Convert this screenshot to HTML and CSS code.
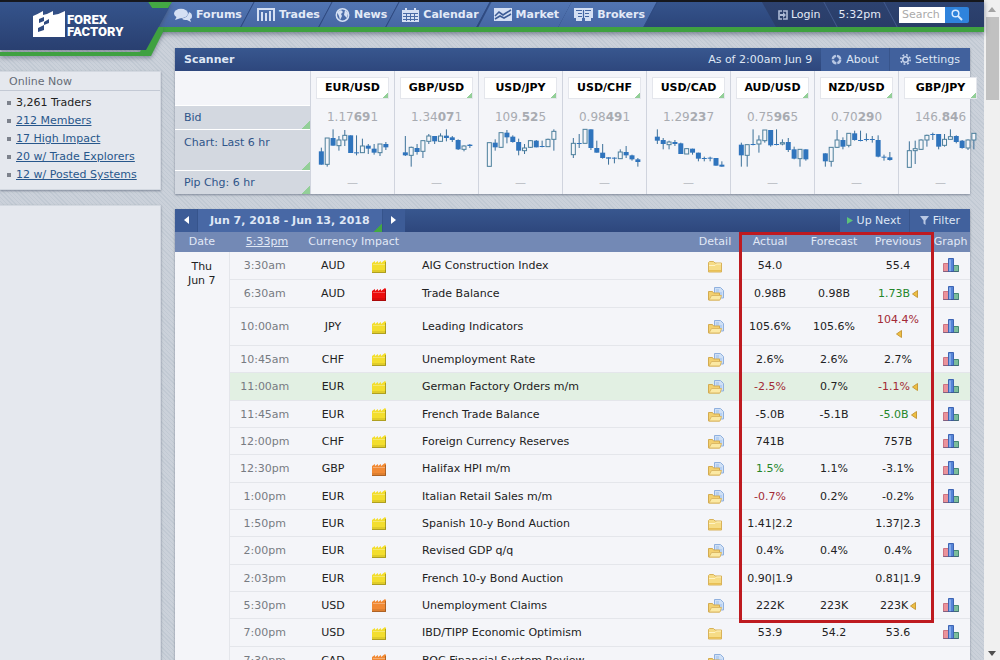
FILE: index.html
```html
<!DOCTYPE html>
<html lang="en">
<head>
<meta charset="utf-8">
<title>Forex Factory</title>
<link rel="stylesheet" href="styles.css">
</head>
<body>
<svg class="sprite" aria-hidden="true">
  <symbol id="impact" viewBox="0 0 14 13"><path d="M0 3 3 1v2l3-2v2l3-2v2l4-3 1 1v12H0z"/><path d="M0 12h14v1H0zM13 2h1v11h-1z" fill="#000" opacity=".28"/><path d="M0 10h14v2H0z" fill="#000" opacity=".08"/><path d="M1 4h12v1H1z" fill="#fff" opacity=".3"/></symbol>
  <symbol id="folder" viewBox="0 0 17 16"><path d="M1.5 14V4.500l1-1h4l1.500 1.500h6.500v9z" fill="#f6dc86" stroke="#d8b25a"/><path d="M2 7.500h6l1.500-1.500H14" fill="none" stroke="#fff3c4"/><path d="M2 12h12v1.500H2z" fill="#e8bf55"/></symbol>
  <symbol id="folder-open" viewBox="0 0 17 16"><path d="M7.500 9V1.500h6l3 3V12h-3" fill="#cfe0f6" stroke="#8fb0de"/><path d="M9 3h3v3h3v4H9z" fill="#b5cff1"/><path d="M1.500 14V5.500h4l1 1.500h6v7z" fill="#f3d06f" stroke="#d3ab50"/><path d="M2 14 4.500 9.500h10L13 14z" fill="#fbe9a4" stroke="#dcb965"/></symbol>
  <symbol id="bars" viewBox="0 0 16 14"><path d="M.5 5.500h5v8h-5z" fill="#ea929b" stroke="#cc7482"/><path d="M10.500 7.500h5v6h-5z" fill="#7cbd9c" stroke="#468a72"/><path d="M5.500.5h5v13h-5z" fill="#5584d6" stroke="#3d64b4"/><path d="M6 1.500h2v12H6z" fill="#86abea"/><path d="M0 13h16v1H0z" fill="#3c4a7c" opacity=".5"/></symbol>
  <symbol id="revised" viewBox="0 0 6 8"><path d="M5.500.5v7L.5 4z" fill="#eebf42" stroke="#c79a3c"/></symbol>
</svg>
<div class="window">
  <div class="page">
    <header class="topbar">
      <a class="brand" href="#">
        <svg class="brand-shape" viewBox="0 0 176 60" aria-hidden="true">
          <defs><linearGradient id="navy" x2="0" y2="1"><stop offset="0" stop-color="#35548c"/><stop offset="1" stop-color="#293f70"/></linearGradient></defs>
          <path d="M0 54H151L163 30V25H150L140 50H0z" fill="#3fa140"/>
          <path d="M148 0H172L168 6H152z" fill="#43a843"/>
          <path d="M0 0H148L152 6H169L146 48H0z" fill="url(#navy)"/>
        </svg>
        <svg class="brand-mark" viewBox="0 0 32 28" aria-hidden="true"><path d="M0 5Q5 3 10 0V4Q15 3 20 0V4Q27 3 32 0V26H0z" fill="#fff"/><path d="M6 8l5-2v4l-5 2zM11 11l5-3v4l-5 2zM5 17l6-3v5l-6 2z" fill="#2f4b81"/></svg>
        <span class="brand-name"><span>FOREX</span><span>FACTORY</span></span>
      </a>
      <nav class="nav">
        <a href="#"><svg width="18" height="14" viewBox="0 0 18 14"><ellipse cx="7" cy="5.500" rx="7" ry="4.700"/><path d="M3 8 1 12l6-2z"/><path d="M15 4q3 1 3 4t-2 3l1 3-4-2q-4 0-5-1.500 6-1 7-6.500z"/></svg>Forums</a>
        <a href="#"><svg width="18" height="13" viewBox="0 0 18 13"><path d="M0 0h18v2H0zM0 2h2v11H0zM4 4h2v9H4zM8 5h2v8H8zM12 3h2v10h-2zM16 2h2v11h-2z"/></svg>Trades</a>
        <a href="#"><svg width="15" height="14" viewBox="0 0 15 14"><circle cx="7.500" cy="7" r="6.200" fill="none" stroke="#d5e0f4" stroke-width="1.500"/><path d="M2 4l4-2 2 2-2 2 1 2-2 4-1-4zM10 2l3 3-1 5-3-3z"/></svg>News</a>
        <a href="#"><svg width="17" height="14" viewBox="0 0 17 14"><path d="M0 2h3V0h2v2h7V0h2v2h3v12H0z"/><path d="M1 5.500h15M1 8.500h15M1 11.500h15M4.500 5v8M8.500 5v8M12.500 5v8" stroke="#4a6ba6"/></svg>Calendar</a>
        <a href="#"><svg width="18" height="13" viewBox="0 0 18 13"><path d="M0 0h18v13H0z"/><path d="M1 8l4-4 4 3 3-2 5-3M1 11l5-3 4 2 7-4" fill="none" stroke="#3d5c97" stroke-width="1.600"/></svg>Market</a>
        <a href="#"><svg width="19" height="13" viewBox="0 0 19 13"><path d="M0 0h19v10h-2v3h-6v-3H8v3H2v-3H0z"/><path d="M2 2.500h6M11 2.500h6M4 5.500h4M11 5.500h4M4 8.500h4M11 8.500h4M9.500 2v8" stroke="#4566a2" stroke-width="1.200"/></svg>Brokers</a>
      </nav>
      <div class="tools">
        <a class="tool" href="#"><svg width="10" height="10" viewBox="0 0 10 10"><path d="M4 1H1v8h3M5 1h4v8H5" fill="none" stroke="#aebbd6" stroke-width="1.600"/><path d="M2 4h3V2l3 3-3 3V6H2z" fill="#aebbd6"/></svg>Login</a>
        <a class="tool" href="#">5:32pm</a>
        <form class="search">
          <input type="text" placeholder="Search" aria-label="Search">
          <button type="button" aria-label="Run search"><svg width="12" height="12" viewBox="0 0 12 12"><circle cx="4.500" cy="4.500" r="3.300" fill="none" stroke="#d8eaff" stroke-width="1.500"/><path d="M7 7l4 4" stroke="#d8eaff" stroke-width="2"/></svg></button>
        </form>
      </div>
    </header>

    <div class="columns">
      <aside class="sidebar">
        <section class="box">
          <h2>Online Now</h2>
          <ul>
            <li>3,261 Traders</li>
            <li><a href="#">212 Members</a></li>
            <li><a href="#">17 High Impact</a></li>
            <li><a href="#">20 w/ Trade Explorers</a></li>
            <li><a href="#">12 w/ Posted Systems</a></li>
          </ul>
        </section>
        <section class="box fill"></section>
      </aside>

      <main class="content">
        <section class="panel">
          <div class="bar">
            <h1>Scanner</h1>
            <span class="as-of">As of 2:00am Jun 9</span>
            <a class="action" href="#"><svg width="11" height="11" viewBox="0 0 11 11"><circle cx="5.500" cy="5.500" r="3.700" fill="none" stroke="#b9c8e4" stroke-width="2.400" stroke-dasharray="4.800 1"/></svg>About</a>
            <a class="action" href="#"><svg width="11" height="11" viewBox="0 0 11 11"><circle cx="5.500" cy="5.500" r="2.800" fill="none" stroke="#c5d2ea" stroke-width="1.600"/><circle cx="5.500" cy="5.500" r="4.700" fill="none" stroke="#c5d2ea" stroke-width="1.600" stroke-dasharray="1.800 1.890"/></svg>Settings</a>
          </div>
          <div class="scanner">
            <div class="labels">
              <div class="label blank"></div>
              <div class="label">Bid</div>
              <div class="label tall">Chart: Last 6 hr</div>
              <div class="label last">Pip Chg: 6 hr</div>
            </div>
            <div class="pair"><button>EUR/USD</button><p class="bid">1.17<b>69</b>1</p><svg class="candles" data-pair="EURUSD" viewBox="0 24 252 120"></svg><p class="dash">—</p></div>
            <div class="pair"><button>GBP/USD</button><p class="bid">1.34<b>07</b>1</p><svg class="candles" data-pair="GBPUSD" viewBox="0 24 252 120"></svg><p class="dash">—</p></div>
            <div class="pair"><button>USD/JPY</button><p class="bid">109.<b>52</b>5</p><svg class="candles" data-pair="USDJPY" viewBox="0 24 252 120"></svg><p class="dash">—</p></div>
            <div class="pair"><button>USD/CHF</button><p class="bid">0.98<b>49</b>1</p><svg class="candles" data-pair="USDCHF" viewBox="0 24 252 120"></svg><p class="dash">—</p></div>
            <div class="pair"><button>USD/CAD</button><p class="bid">1.29<b>23</b>7</p><svg class="candles" data-pair="USDCAD" viewBox="0 24 252 120"></svg><p class="dash">—</p></div>
            <div class="pair"><button>AUD/USD</button><p class="bid">0.75<b>96</b>5</p><svg class="candles" data-pair="AUDUSD" viewBox="0 24 252 120"></svg><p class="dash">—</p></div>
            <div class="pair"><button>NZD/USD</button><p class="bid">0.70<b>29</b>0</p><svg class="candles" data-pair="NZDUSD" viewBox="0 24 252 120"></svg><p class="dash">—</p></div>
            <div class="pair"><button>GBP/JPY</button><p class="bid">146.<b>84</b>6</p><svg class="candles" data-pair="GBPJPY" viewBox="0 24 252 120"></svg><p class="dash">—</p></div>
          </div>
        </section>

        <section class="panel">
          <div class="bar">
            <button class="step" aria-label="Previous week"><svg width="5" height="8" viewBox="0 0 5 8"><path d="M5 0v8L0 4z"/></svg></button>
            <button class="range">Jun 7, 2018 - Jun 13, 2018</button>
            <button class="step" aria-label="Next week"><svg width="5" height="8" viewBox="0 0 5 8"><path d="M0 0v8l5-4z"/></svg></button>
            <a class="action push" href="#"><svg width="6" height="7" viewBox="0 0 6 7"><path d="M0 0v7l6-3.500z" fill="#5cc27b"/></svg>Up Next</a>
            <a class="action" href="#"><svg width="9" height="9" viewBox="0 0 9 9"><path d="M0 0h9L5.500 4.500V9l-2-1.500v-3z" fill="#b9c8e4"/></svg>Filter</a>
          </div>
          <table class="calendar">
            <colgroup><col class="c-date"><col class="c-time"><col class="c-cur"><col class="c-imp"><col><col class="c-det"><col class="c-act"><col class="c-for"><col class="c-prev"><col class="c-graph"></colgroup>
            <thead><tr><th>Date</th><th><a href="#">5:33pm</a></th><th>Currency</th><th>Impact</th><th></th><th>Detail</th><th>Actual</th><th>Forecast</th><th>Previous</th><th>Graph</th></tr></thead>
            <tbody>
              <tr><td class="date" rowspan="15">Thu<br>Jun 7</td><td class="time">3:30am</td><td>AUD</td><td><svg class="imp low"><use href="#impact"/></svg></td><td class="event">AIG Construction Index</td><td><svg class="det"><use href="#folder"/></svg></td><td>54.0</td><td></td><td>55.4</td><td><svg class="graph"><use href="#bars"/></svg></td></tr>
              <tr><td class="time">6:30am</td><td>AUD</td><td><svg class="imp high"><use href="#impact"/></svg></td><td class="event">Trade Balance</td><td><svg class="det"><use href="#folder-open"/></svg></td><td>0.98B</td><td>0.98B</td><td class="better">1.73B<svg class="rev"><use href="#revised"/></svg></td><td><svg class="graph"><use href="#bars"/></svg></td></tr>
              <tr class="double"><td class="time">10:00am</td><td>JPY</td><td><svg class="imp low"><use href="#impact"/></svg></td><td class="event">Leading Indicators</td><td><svg class="det"><use href="#folder-open"/></svg></td><td>105.6%</td><td>105.6%</td><td class="worse">104.4%<br><svg class="rev"><use href="#revised"/></svg></td><td><svg class="graph"><use href="#bars"/></svg></td></tr>
              <tr><td class="time">10:45am</td><td>CHF</td><td><svg class="imp low"><use href="#impact"/></svg></td><td class="event">Unemployment Rate</td><td><svg class="det"><use href="#folder-open"/></svg></td><td>2.6%</td><td>2.6%</td><td>2.7%</td><td><svg class="graph"><use href="#bars"/></svg></td></tr>
              <tr class="marked"><td class="time">11:00am</td><td>EUR</td><td><svg class="imp low"><use href="#impact"/></svg></td><td class="event">German Factory Orders m/m</td><td><svg class="det"><use href="#folder-open"/></svg></td><td class="worse">-2.5%</td><td>0.7%</td><td class="worse">-1.1%<svg class="rev"><use href="#revised"/></svg></td><td><svg class="graph"><use href="#bars"/></svg></td></tr>
              <tr><td class="time">11:45am</td><td>EUR</td><td><svg class="imp low"><use href="#impact"/></svg></td><td class="event">French Trade Balance</td><td><svg class="det"><use href="#folder-open"/></svg></td><td>-5.0B</td><td>-5.1B</td><td class="better">-5.0B<svg class="rev"><use href="#revised"/></svg></td><td><svg class="graph"><use href="#bars"/></svg></td></tr>
              <tr><td class="time">12:00pm</td><td>CHF</td><td><svg class="imp low"><use href="#impact"/></svg></td><td class="event">Foreign Currency Reserves</td><td><svg class="det"><use href="#folder-open"/></svg></td><td>741B</td><td></td><td>757B</td><td><svg class="graph"><use href="#bars"/></svg></td></tr>
              <tr><td class="time">12:30pm</td><td>GBP</td><td><svg class="imp medium"><use href="#impact"/></svg></td><td class="event">Halifax HPI m/m</td><td><svg class="det"><use href="#folder-open"/></svg></td><td class="better">1.5%</td><td>1.1%</td><td>-3.1%</td><td><svg class="graph"><use href="#bars"/></svg></td></tr>
              <tr><td class="time">1:00pm</td><td>EUR</td><td><svg class="imp low"><use href="#impact"/></svg></td><td class="event">Italian Retail Sales m/m</td><td><svg class="det"><use href="#folder-open"/></svg></td><td class="worse">-0.7%</td><td>0.2%</td><td>-0.2%</td><td><svg class="graph"><use href="#bars"/></svg></td></tr>
              <tr><td class="time">1:50pm</td><td>EUR</td><td><svg class="imp low"><use href="#impact"/></svg></td><td class="event">Spanish 10-y Bond Auction</td><td><svg class="det"><use href="#folder"/></svg></td><td>1.41|2.2</td><td></td><td>1.37|2.3</td><td></td></tr>
              <tr><td class="time">2:00pm</td><td>EUR</td><td><svg class="imp low"><use href="#impact"/></svg></td><td class="event">Revised GDP q/q</td><td><svg class="det"><use href="#folder-open"/></svg></td><td>0.4%</td><td>0.4%</td><td>0.4%</td><td><svg class="graph"><use href="#bars"/></svg></td></tr>
              <tr><td class="time">2:03pm</td><td>EUR</td><td><svg class="imp low"><use href="#impact"/></svg></td><td class="event">French 10-y Bond Auction</td><td><svg class="det"><use href="#folder"/></svg></td><td>0.90|1.9</td><td></td><td>0.81|1.9</td><td></td></tr>
              <tr><td class="time">5:30pm</td><td>USD</td><td><svg class="imp medium"><use href="#impact"/></svg></td><td class="event">Unemployment Claims</td><td><svg class="det"><use href="#folder-open"/></svg></td><td>222K</td><td>223K</td><td>223K<svg class="rev"><use href="#revised"/></svg></td><td><svg class="graph"><use href="#bars"/></svg></td></tr>
              <tr><td class="time">7:00pm</td><td>USD</td><td><svg class="imp low"><use href="#impact"/></svg></td><td class="event">IBD/TIPP Economic Optimism</td><td><svg class="det"><use href="#folder"/></svg></td><td>53.9</td><td>54.2</td><td>53.6</td><td><svg class="graph"><use href="#bars"/></svg></td></tr>
              <tr><td class="time">7:30pm</td><td>CAD</td><td><svg class="imp medium"><use href="#impact"/></svg></td><td class="event">BOC Financial System Review</td><td><svg class="det"><use href="#folder-open"/></svg></td><td></td><td></td><td></td><td></td></tr>
            </tbody>
          </table>
          <div class="highlight"></div>
        </section>
      </main>
    </div>
  </div>
  <div class="scrollbar" aria-hidden="true">
    <svg width="8" height="5" viewBox="0 0 8 5"><path d="M4 0l4 5H0z" fill="#a3a3a3"/></svg>
    <div class="thumb"></div>
    <svg class="down" width="8" height="5" viewBox="0 0 8 5"><path d="M0 0h8L4 5z" fill="#505050"/></svg>
  </div>
</div>
<script src="charts.js"></script>
</body>
</html>
```
FILE: styles.css
```css
* { box-sizing: border-box; }
body { margin: 0; font: 11px/14px "DejaVu Sans", sans-serif; color: #222; }
h1, h2, p, ul { margin: 0; padding: 0; font-size: 11px; }
a { color: inherit; text-decoration: none; }
button { border: 0; padding: 0; margin: 0; background: none; font: inherit; color: inherit; cursor: pointer; }
.sprite { position: absolute; width: 0; height: 0; }

.window { display: flex; height: 100vh; overflow: hidden; }
.page { flex: 1; min-width: 0; display: flex; flex-direction: column; background: repeating-linear-gradient(45deg, #c1c9d3 0 1px, #cbd1da 1px 3px); }

.topbar { position: relative; z-index: 2; flex: none; display: flex; height: 32px; border-top: 2px solid #15171c; border-bottom: 5px solid #3fa140; background: linear-gradient(#35548c, #2c457a); box-shadow: 0 2px 5px rgba(60, 70, 90, .6); color: #e3eaf7; }
.brand { position: relative; z-index: 1; flex: none; width: 164px; height: 54px; padding: 9px 0 0 33px; display: flex; gap: 2px; }
.brand-shape { position: absolute; left: 0; top: 0; width: 176px; height: 60px; filter: drop-shadow(0 2px 2px rgba(60, 70, 90, .5)); }
.brand-mark { position: relative; width: 32px; height: 28px; }
.brand-name { position: relative; display: flex; flex-direction: column; padding-top: 3px; font: 900 13px/12px Roboto, sans-serif; color: #fff; }
.nav { display: flex; }
.nav a { position: relative; display: flex; align-items: center; gap: 4px; padding: 0 5px 0 10px; font-weight: bold; }
.nav a::before { content: ""; position: absolute; z-index: -1; inset: 0 -1px 0 1px; background: linear-gradient(#5275b2, #4667a3); border-right: 1px solid #2f4a80; transform: skewX(-28deg); }
.nav svg { fill: #d5e0f4; }
.tools { display: flex; align-items: stretch; margin-left: auto; padding: 0 15px 0 16px; background: linear-gradient(#2d4270, #293d68); clip-path: polygon(0 0, 100% 0, 100% 100%, 14px 100%); }
.tool { position: relative; display: flex; align-items: center; gap: 3px; padding-right: 18px; }
.tool::after { content: ""; position: absolute; top: 0; bottom: 0; right: 8px; border-right: 1px solid #435b8e; transform: skewX(28deg); }
.search { display: flex; align-items: center; }
.search input { width: 46px; height: 16px; padding: 0 3px; border: 0; background: #fff; font: inherit; color: #333; }
.search input::placeholder { color: #aaa; opacity: 1; }
.search button { display: grid; place-items: center; width: 24px; height: 16px; border-radius: 0 2px 2px 0; background: #2f83dc; }

.columns { flex: 1; display: grid; grid-template-columns: 161px minmax(0, 1fr); column-gap: 14px; min-height: 0; padding-right: 14px; }
.sidebar { display: flex; flex-direction: column; gap: 15px; padding-top: 39px; }
.box { background: #e5e8ee; border: 1px solid #d3d8e0; border-left: 0; box-shadow: 0 1px 2px rgba(80, 90, 110, .6); }
.box h2 { padding: 3px 9px 1px; border-bottom: 1px solid #c3c9d4; font-weight: normal; color: #666c77; }
.box ul { padding: 3px 0 5px 7px; list-style: none; }
.box li { display: flex; align-items: center; gap: 5px; line-height: 18px; }
.box li::before { content: ""; width: 4px; height: 4px; background: #7d828c; }
.box a { color: #28578b; text-decoration: underline; }
.fill { flex: 1; }

.content { display: flex; flex-direction: column; gap: 15px; padding-top: 16px; }
.panel { position: relative; background: #f4f5f9; box-shadow: 0 1px 2px rgba(80, 90, 110, .6); }
.bar { display: flex; align-items: stretch; height: 23px; background: linear-gradient(#38578f, #2e477d); color: #dfe7f5; }
.bar h1 { align-self: center; padding-left: 9px; font-weight: bold; }
.as-of { align-self: center; margin-left: auto; padding-right: 9px; }
.action { display: flex; align-items: center; gap: 4px; padding: 0 10px; background: #41619d; border-right: 1px solid #38558c; }
.action:last-child { border-right: 0; }
.push { margin-left: auto; padding: 0 8px 0 7px; }
.step { width: 22px; background: #3d5c97; }
.step svg { fill: #fff; }
.range { padding: 0 12px; font-weight: bold; background: linear-gradient(315deg, #43a843 6px, transparent 6px) #4868a5; border: solid #36548c; border-width: 0 1px; }

.scanner { display: grid; grid-template-columns: 135px repeat(8, 84px); }
.labels { display: flex; flex-direction: column; gap: 1px; background: #fff; }
.label { flex: 1; display: flex; align-items: center; padding-left: 9px; color: #2f5589; background: linear-gradient(315deg, #93cf98 6px, transparent 6px) #d3d8e0; }
.label.blank { flex: none; height: 34px; background: #f4f5f9; }
.label.tall { flex: none; height: 40px; align-items: flex-start; padding-top: 6px; }
.pair { display: flex; flex-direction: column; border-left: 1px solid #d0d4de; padding-top: 6px; text-align: center; }
.pair button { height: 22px; margin: 0 5px; border: 1px solid #e4e6ec; background: linear-gradient(315deg, #93cf98 4px, transparent 4px) #fff; font-weight: bold; color: #000; }
.bid { padding: 11px 0 4px; font-size: 12px; color: #a8abb1; }
.bid b { font-weight: bold; }
.candles { display: block; width: 84px; height: 40px; }
.candles .wick { stroke: #3c7099; stroke-width: 3; }
.candles .up { fill: #f4f5f9; stroke: #4c7f9c; stroke-width: 3; }
.candles .down { fill: #2f74bd; }
.dash { padding: 8px 0 4px; color: #b5b8be; }

.calendar { width: 100%; table-layout: fixed; border-collapse: collapse; }
.c-date { width: 54px; }
.c-time { width: 76px; }
.c-cur { width: 56px; }
.c-imp { width: 36px; }
.c-det { width: 44px; }
.c-act { width: 66px; }
.c-for { width: 62px; }
.c-prev { width: 66px; }
.c-graph { width: 39px; }
.calendar th { height: 20px; padding: 0; background: #7389b5; font-weight: normal; color: #e1e8f5; white-space: nowrap; }
.calendar th a { text-decoration: underline; }
.calendar tbody tr { height: 27px; }
.calendar tbody tr:nth-child(3n+2) { height: 28px; }
.calendar tbody tr.double { height: 38px; }
.calendar td { padding: 2px 0 0; border-bottom: 1px solid #e4e6eb; text-align: center; white-space: nowrap; }
.calendar td.date { padding-top: 8px; border-right: 1px solid #e4e6eb; vertical-align: top; }
.calendar td.time { padding-right: 5px; color: #777b82; }
.calendar td.event { padding-left: 25px; text-align: left; }
.calendar td:last-child { padding: 0; }
.marked td { background: #e2f0e3; }
.calendar td.better { color: #24862a; }
.calendar td.worse { color: #a32a35; }
.calendar svg { vertical-align: middle; }
.imp { width: 14px; height: 13px; }
.low { fill: #f3de2e; }
.medium { fill: #f18a35; }
.high { fill: #ec0d0d; }
.det { width: 17px; height: 16px; }
.graph { width: 16px; height: 14px; }
.rev { width: 6px; height: 8px; margin-left: 2px; }
.highlight { position: absolute; top: 23px; right: 36px; width: 195px; height: 391px; border: 3px solid #be1a20; pointer-events: none; }

.scrollbar { flex: none; display: flex; flex-direction: column; align-items: center; width: 16px; padding: 7px 0 4px; background: #f0f0f0; }
.thumb { width: 13px; height: 83px; margin-top: 5px; background: #c1c1c1; }
.down { margin-top: auto; }
```
FILE: charts.js
```js
// Candle: high, body top, body bottom, low, 1 = falling (filled) / 0 = rising (hollow)
const series = {
  EURUSD: [[83,94,134,134,1],[54,54,133,140,0],[28,54,77,77,1],[48,60,77,92,0],[30,46,60,78,0],[46,46,99,99,1],[46,97,100,106,1],[56,78,98,98,0],[72,77,86,102,1],[72,86,98,104,1],[72,72,98,108,0],[66,72,82,90,1]],
  GBPUSD: [[48,97,106,108,1],[80,82,106,140,0],[72,84,96,104,1],[62,62,94,114,0],[42,48,64,72,0],[48,48,64,72,1],[40,48,64,64,0],[28,47,54,64,1],[48,52,60,66,1],[58,60,88,90,1],[76,78,88,94,0],[72,74,78,84,1]],
  USDJPY: [[68,68,139,139,0],[58,68,82,92,1],[38,38,82,84,0],[30,38,52,70,1],[46,50,66,68,1],[56,66,92,106,1],[72,84,92,102,0],[60,62,82,84,0],[60,62,82,82,1],[62,78,81,82,1],[56,58,80,80,0],[28,34,58,92,0]],
  USDCHF: [[54,70,104,114,0],[42,69,72,84,1],[28,28,70,70,0],[28,28,84,90,1],[62,84,98,98,1],[72,98,114,116,1],[112,112,116,134,1],[112,113,116,130,1],[88,96,116,116,0],[78,96,106,114,1],[104,106,118,122,1],[114,118,126,140,1]],
  USDCAD: [[28,50,62,72,1],[54,60,72,88,1],[62,66,74,88,0],[60,66,72,78,1],[68,70,102,102,1],[86,86,102,102,0],[86,86,98,104,1],[98,98,116,124,1],[110,114,117,124,1],[110,113,116,124,1],[114,114,137,137,1],[124,134,140,140,1]],
  AUDUSD: [[68,74,106,140,1],[74,74,106,140,0],[28,72,75,76,1],[46,60,72,98,0],[30,30,62,68,0],[30,30,76,80,1],[28,72,75,76,1],[58,68,72,76,0],[54,66,90,96,1],[80,88,116,118,1],[88,88,116,140,0],[88,88,118,122,1]],
  NZDUSD: [[100,100,124,140,1],[82,82,124,140,0],[30,60,82,84,0],[52,60,80,88,1],[40,40,76,82,0],[32,40,60,62,1],[32,60,63,64,1],[40,57,60,64,1],[48,57,60,68,1],[46,60,110,112,1],[104,110,113,122,1],[96,112,120,122,1]],
  GBPJPY: [[64,92,142,142,0],[62,86,92,132,0],[58,60,88,90,0],[44,46,60,80,0],[38,42,45,60,1],[42,42,80,88,1],[42,58,76,80,0],[28,50,58,58,0],[46,48,66,70,1],[60,62,84,86,1],[58,60,84,90,0],[40,40,60,88,0]]
};

document.querySelectorAll(".candles").forEach((svg) => {
  svg.innerHTML = series[svg.dataset.pair].map(([high, top, bottom, low, falling], i) => {
    const x = 31 + i * 17.6;
    const half = falling ? 7.5 : 6;
    return `<path class="wick" d="M${x} ${high}V${low}"/>` +
      `<rect class="${falling ? "down" : "up"}" x="${x - half}" y="${top}" width="${half * 2}" height="${bottom - top}"/>`;
  }).join("");
});
```
